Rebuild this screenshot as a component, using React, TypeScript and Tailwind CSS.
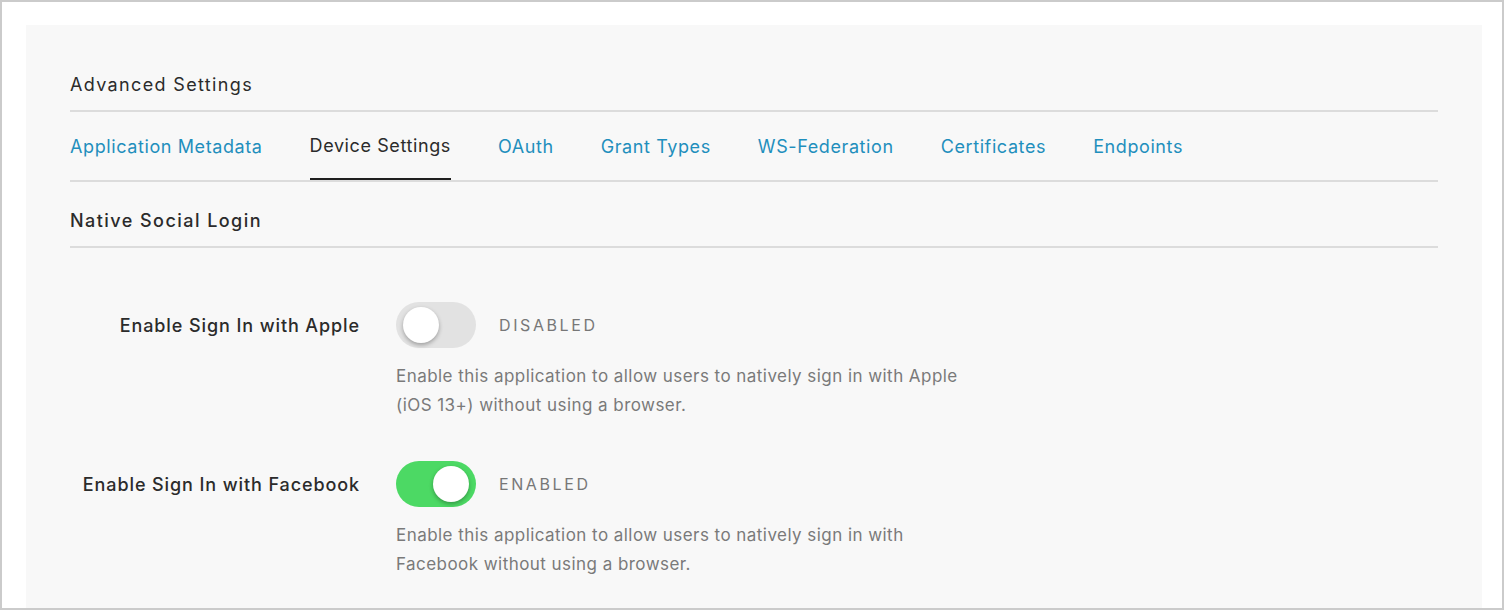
import { useState } from "react";

const tabs = [
  "Application Metadata",
  "Device Settings",
  "OAuth",
  "Grant Types",
  "WS-Federation",
  "Certificates",
  "Endpoints"
];

interface ToggleRowProps {
  label: string;
  enabled: boolean;
  lines: string[];
  onToggle: () => void;
}

const ToggleRow = ({ label, enabled, lines, onToggle }: ToggleRowProps) => (
  <div className="grid grid-cols-[290px_1fr] gap-x-[36px]">
    <div className="flex h-[46px] items-center justify-end text-[18px] font-medium tracking-[0.9px] text-[#2b2b2b]">
      {label}
    </div>
    <div>
      <div className="flex items-center gap-[23px]">
        <button
          type="button"
          onClick={onToggle}
          className={
            enabled
              ? "flex h-[46px] w-[80px] items-center justify-end rounded-full bg-[#4cd964] px-[7px]"
              : "flex h-[46px] w-[80px] items-center justify-start rounded-full bg-[#e2e2e2] px-[7px]"
          }
        >
          <span className="block h-[36px] w-[36px] rounded-full bg-white shadow-[0_2px_4px_rgba(0,0,0,0.3)]" />
        </button>
        <span className="text-[16px] tracking-[2.6px] text-[#777777]">
          {enabled ? "ENABLED" : "DISABLED"}
        </span>
      </div>
      <p className="mt-[14px] text-[17px] leading-[29px] tracking-[0.45px] text-[#7a7a7a]">
        {lines[0]}
        <br />
        {lines[1]}
      </p>
    </div>
  </div>
);

export default function App() {
  const [apple, setApple] = useState(false);
  const [facebook, setFacebook] = useState(true);

  return (
    <div
      className="h-[610px] w-[1504px] overflow-hidden border-2 border-[#cbcbcb] bg-white"
      style={{ fontFamily: "Inter, 'Noto Sans', sans-serif" }}
    >
      <div className="ml-[24px] mt-[23px] h-full w-[1456px] bg-[#f8f8f8] px-[44px] pt-[46px]">
        <div className="border-b-2 border-[#dcdcdc] pb-[11px] text-[18px] leading-[28px] tracking-[1.35px] text-[#2b2b2b]">
          Advanced Settings
        </div>

        <div className="flex gap-[47px] border-b-2 border-[#dcdcdc]">
          {tabs.map((tab) => (
            <div
              key={tab}
              className={
                tab === "Device Settings"
                  ? "-mb-[3px] flex h-[68px] items-center border-b-2 border-[#1f1f1f] text-[18px] tracking-[0.6px] text-[#2b2b2b]"
                  : "flex h-[68px] items-center text-[18px] tracking-[0.6px] text-[#1f8fbd]"
              }
            >
              {tab}
            </div>
          ))}
        </div>

        <div className="border-b-2 border-[#dcdcdc] pb-[11px] pt-[25px] text-[18px] font-medium leading-[28px] tracking-[1.45px] text-[#2b2b2b]">
          Native Social Login
        </div>

        <div className="mt-[54px]">
          <ToggleRow
            label="Enable Sign In with Apple"
            enabled={apple}
            onToggle={() => setApple(!apple)}
            lines={[
              "Enable this application to allow users to natively sign in with Apple",
              "(iOS 13+) without using a browser."
            ]}
          />
        </div>
        <div className="mt-[41px]">
          <ToggleRow
            label="Enable Sign In with Facebook"
            enabled={facebook}
            onToggle={() => setFacebook(!facebook)}
            lines={[
              "Enable this application to allow users to natively sign in with",
              "Facebook without using a browser."
            ]}
          />
        </div>
      </div>
    </div>
  );
}
